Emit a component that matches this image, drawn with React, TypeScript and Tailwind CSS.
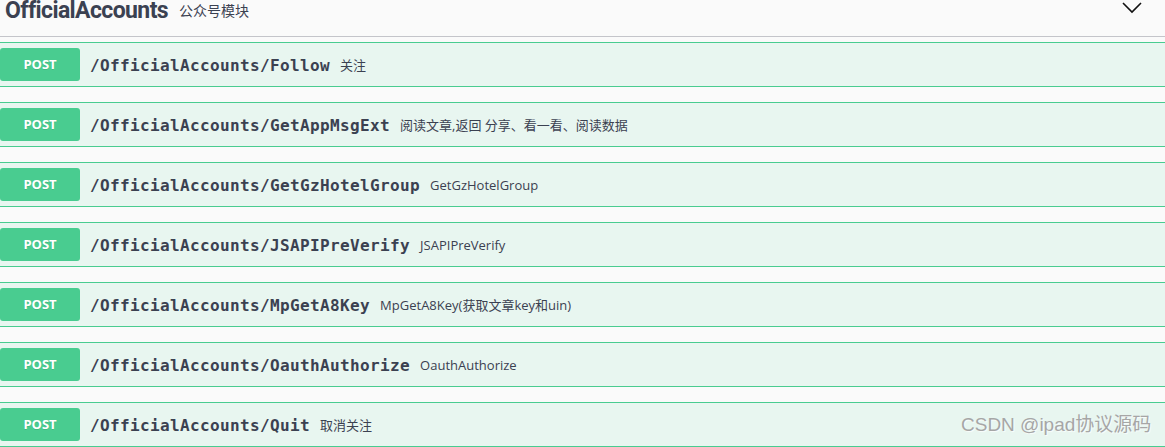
import React from "react";

const rows: { path: string; desc: string }[] = [
  { path: "/OfficialAccounts/Follow", desc: "关注" },
  { path: "/OfficialAccounts/GetAppMsgExt", desc: "阅读文章,返回 分享、看一看、阅读数据" },
  { path: "/OfficialAccounts/GetGzHotelGroup", desc: "GetGzHotelGroup" },
  { path: "/OfficialAccounts/JSAPIPreVerify", desc: "JSAPIPreVerify" },
  { path: "/OfficialAccounts/MpGetA8Key", desc: "MpGetA8Key(获取文章key和uin)" },
  { path: "/OfficialAccounts/OauthAuthorize", desc: "OauthAuthorize" },
  { path: "/OfficialAccounts/Quit", desc: "取消关注" },
];

export default function App() {
  return (
    <div className="relative w-[1165px] h-[447px] overflow-hidden bg-[#fafafa] text-[#3b4151]">
      <div className="flex items-start h-[37px] border-b border-[#c4c5ca]">
        <div className="ml-[5px] -mt-[1px] text-[23px] leading-[24px] font-bold tracking-[-0.6px] font-['Roboto','Noto_Sans',sans-serif]">
          OfficialAccounts
        </div>
        <div className="ml-[11px] mt-[2px] text-[14px] leading-[18px] font-['Open_Sans','Noto_Sans_CJK_SC',sans-serif]">
          公众号模块
        </div>
        <svg
          className="ml-auto mr-[23px] mt-[2px]"
          width="20"
          height="12"
          viewBox="0 0 20 12"
          fill="none"
        >
          <polyline points="1,1 10,10 19,1" stroke="#111" strokeWidth="1.6" />
        </svg>
      </div>
      <div className="mt-[5px] flex flex-col">
        {rows.map((r) => (
          <div
            key={r.path}
            className="flex items-center h-[45px] mb-[15px] border-y border-[#49cc90] bg-[#e8f6f0]"
          >
            <div className="flex items-center justify-center w-[80px] h-[33px] rounded-[3px] bg-[#49cc90] text-white text-[13px] font-bold font-['Open_Sans',sans-serif] [text-shadow:0_1px_0_rgba(0,0,0,0.1)]">
              POST
            </div>
            <div className="ml-[10px] pt-[2px] text-[16px] font-bold tracking-[0.37px] font-['DejaVu_Sans_Mono',monospace]">
              {r.path}
            </div>
            <div className="ml-[10px] pt-[2px] text-[13px] font-['Open_Sans','Noto_Sans_CJK_SC',sans-serif]">
              {r.desc}
            </div>
          </div>
        ))}
      </div>
      <div className="absolute left-[961px] top-[413px] text-[19px] leading-[24px] text-[#a6a6a6] font-['Liberation_Sans','Noto_Sans_CJK_SC',sans-serif] [text-shadow:1px_1px_1px_rgba(255,255,255,0.8)]">
        CSDN @ipad协议源码
      </div>
    </div>
  );
}
